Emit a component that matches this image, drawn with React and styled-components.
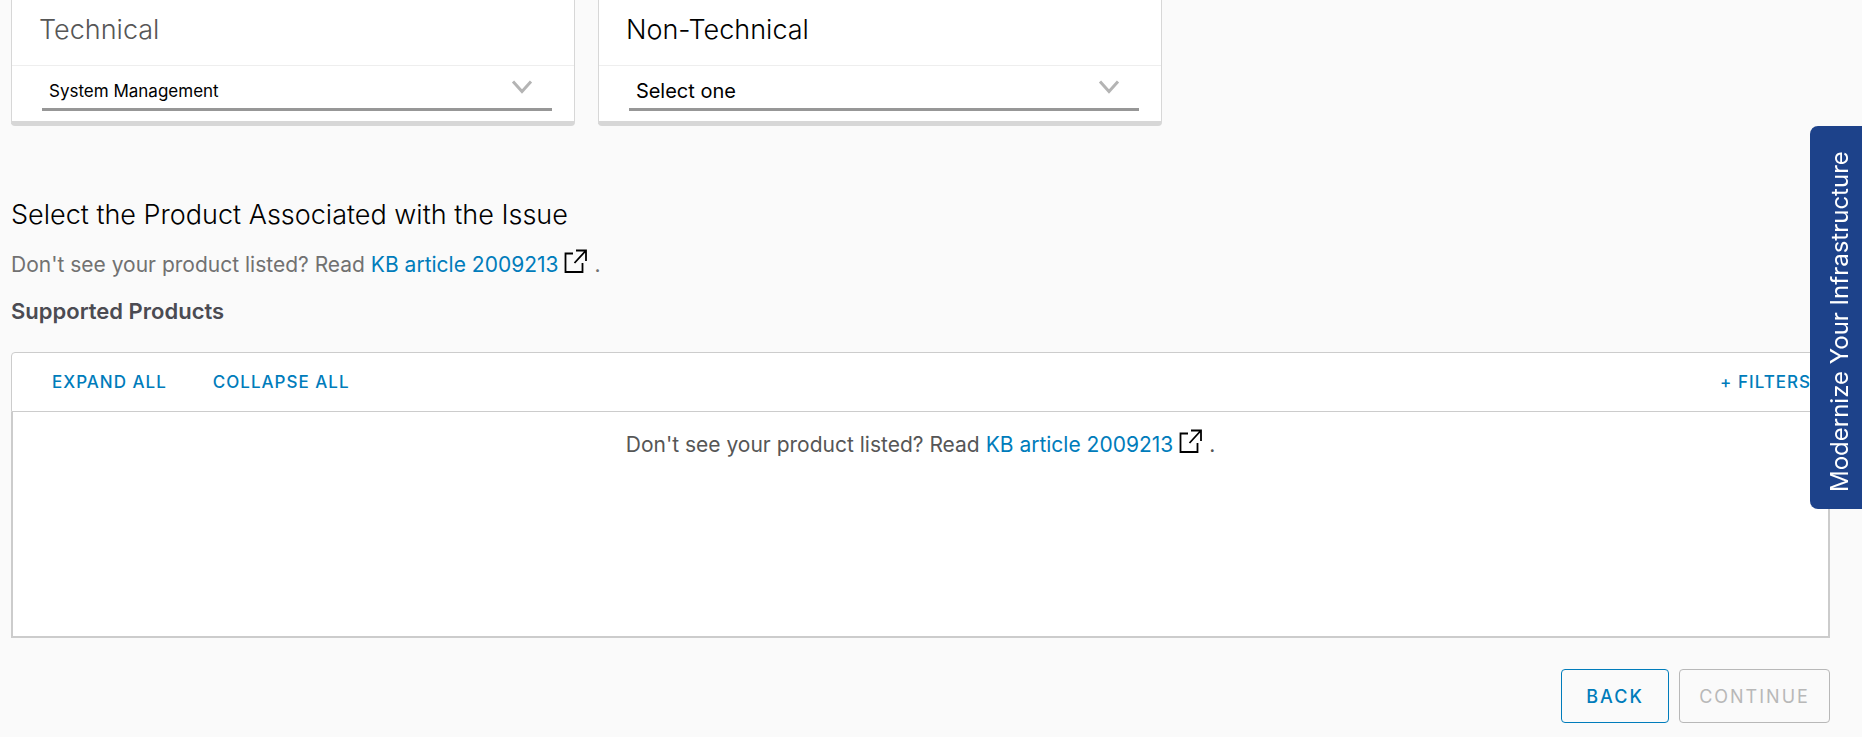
import { useState } from 'react';
import styled, { createGlobalStyle } from 'styled-components';

const Colors = {
  page: '#fafafa',
  link: '#007cbb',
  line: '#cccccc',
  muted: '#717171',
  text: '#565656',
  disabled: '#b8b8b8',
  navy: '#1d428a',
};

function ExternalIcon() {
  return (
    <IconSvg width='24' height='24' viewBox='0 0 24 24' aria-hidden='true'>
      <path d='M9 4.5H1.5V23h17v-9M12 1.5h10V12M21.5 2L10.5 14' />
    </IconSvg>
  );
}

function Hint({ centered }) {
  return (
    <HintText $centered={centered}>
      Don't see your product listed? Read{' '}
      <a href='#kb-2009213'>KB article 2009213</a>
      <ExternalIcon /> .
    </HintText>
  );
}

function CategoryCard({ id, title, muted, small, options }) {
  const [value, setValue] = useState(options[0]);

  return (
    <Card>
      <CardTitle htmlFor={id} $muted={muted}>
        {title}
      </CardTitle>
      <SelectRow>
        <Select
          id={id}
          $small={small}
          value={value}
          onChange={(e) => setValue(e.target.value)}
        >
          {options.map((o) => (
            <option key={o}>{o}</option>
          ))}
        </Select>
        <Chevron width='22' height='14' viewBox='0 0 22 14' aria-hidden='true'>
          <path d='M2 1.5l9 10 9-10' />
        </Chevron>
      </SelectRow>
    </Card>
  );
}

export default function App() {
  return (
    <>
      <GlobalStyle />
      <Page>
        <Cards>
          <CategoryCard
            id='technical'
            title='Technical'
            muted
            small
            options={['System Management']}
          />
          <CategoryCard
            id='non-technical'
            title='Non-Technical'
            options={['Select one']}
          />
        </Cards>

        <Heading>Select the Product Associated with the Issue</Heading>
        <Hint />
        <SubHeading>Supported Products</SubHeading>

        <Toolbar>
          <TextButton>Expand all</TextButton>
          <TextButton>Collapse all</TextButton>
          <FilterButton>+ Filters</FilterButton>
        </Toolbar>
        <Results>
          <Hint centered />
        </Results>

        <Actions>
          <Button>Back</Button>
          <Button disabled>Continue</Button>
        </Actions>
      </Page>
      <SideTab>Modernize Your Infrastructure</SideTab>
    </>
  );
}

const GlobalStyle = createGlobalStyle`
  * {
    box-sizing: border-box;
  }

  body {
    margin: 0;
    background: ${Colors.page};
    font-family: Inter, 'Open Sans', sans-serif;
  }

  button, select {
    font-family: inherit;
  }

  a {
    color: ${Colors.link};
    text-decoration: none;
  }
`;

const Page = styled.main`
  padding: 0 32px 14px 11px;
`;

const Cards = styled.div`
  display: flex;
  gap: 23px;
`;

const Card = styled.section`
  flex: 0 0 31%;
  background: #fff;
  border: 1px solid #d7d7d7;
  border-top: 0;
  border-bottom-width: 5px;
  border-radius: 0 0 4px 4px;
`;

const CardTitle = styled.label`
  display: block;
  height: 66px;
  padding: 14px 27px;
  border-bottom: 1px solid #eeeeee;
  font-size: 27px;
  font-weight: 300;
  line-height: 32px;
  color: ${(props) => (props.$muted ? Colors.text : '#000')};
`;

const SelectRow = styled.div`
  display: grid;
  align-items: center;
  margin: 0 22px 10px 30px;
  border-bottom: 3px solid #979797;
`;

const Select = styled.select`
  grid-area: 1 / 1;
  height: 42px;
  padding: 8px 48px 0 7px;
  appearance: none;
  border: 0;
  outline: 0;
  background: transparent;
  color: #000;
  font-size: ${(props) => (props.$small ? '17px' : '20px')};
`;

const Chevron = styled.svg`
  grid-area: 1 / 1;
  justify-self: end;
  margin-right: 19px;
  pointer-events: none;
  fill: none;
  stroke: #b4b4b4;
  stroke-width: 3;
`;

const Heading = styled.h1`
  margin: 73px 0 0;
  font-size: 27px;
  font-weight: 300;
  line-height: 32px;
  color: #000;
`;

const HintText = styled.p`
  margin: ${(props) => (props.$centered ? '0' : '18px 0 0')};
  text-align: ${(props) => (props.$centered ? 'center' : 'left')};
  font-size: 21px;
  line-height: 32px;
  color: ${(props) => (props.$centered ? Colors.text : Colors.muted)};
`;

const IconSvg = styled.svg`
  margin-left: 6px;
  vertical-align: -1px;
  fill: none;
  stroke: #000;
  stroke-width: 1.8;
`;

const SubHeading = styled.h2`
  margin: 14px 0 25px;
  font-size: 22px;
  font-weight: 600;
  line-height: 32px;
  color: #4b4b52;
`;

const Toolbar = styled.div`
  display: flex;
  align-items: center;
  gap: 46px;
  height: 60px;
  padding: 0 18px 0 40px;
  background: #fff;
  border: 1px solid ${Colors.line};
  border-radius: 4px 4px 0 0;
`;

const TextButton = styled.button`
  padding: 0;
  border: 0;
  background: none;
  color: ${Colors.link};
  font-size: 17px;
  font-weight: 500;
  line-height: 24px;
  letter-spacing: 1px;
  text-transform: uppercase;
  cursor: pointer;
`;

const FilterButton = styled(TextButton)`
  margin-left: auto;
`;

const Results = styled.div`
  min-height: 226px;
  padding: 17px 0;
  background: #fff;
  border: 2px solid ${Colors.line};
  border-top: 0;
`;

const Actions = styled.div`
  display: flex;
  justify-content: flex-end;
  gap: 10px;
  margin-top: 31px;
`;

const Button = styled.button`
  height: 54px;
  padding: 0 18px;
  min-width: 108px;
  border: 1px solid ${Colors.link};
  border-radius: 4px;
  background: transparent;
  color: ${Colors.link};
  font-size: 18px;
  font-weight: 500;
  letter-spacing: 2px;
  text-transform: uppercase;
  cursor: pointer;

  &:disabled {
    min-width: 151px;
    border-color: ${Colors.disabled};
    color: ${Colors.disabled};
    font-weight: 400;
    cursor: default;
  }
`;

const SideTab = styled.button`
  position: fixed;
  top: 126px;
  right: 0;
  width: 52px;
  height: 383px;
  padding: 16px 8px 24px 0;
  border: 0;
  border-radius: 0 8px 8px 0;
  background: ${Colors.navy};
  color: #fff;
  font-size: 24px;
  writing-mode: vertical-rl;
  transform: rotate(180deg);
  cursor: pointer;
`;
